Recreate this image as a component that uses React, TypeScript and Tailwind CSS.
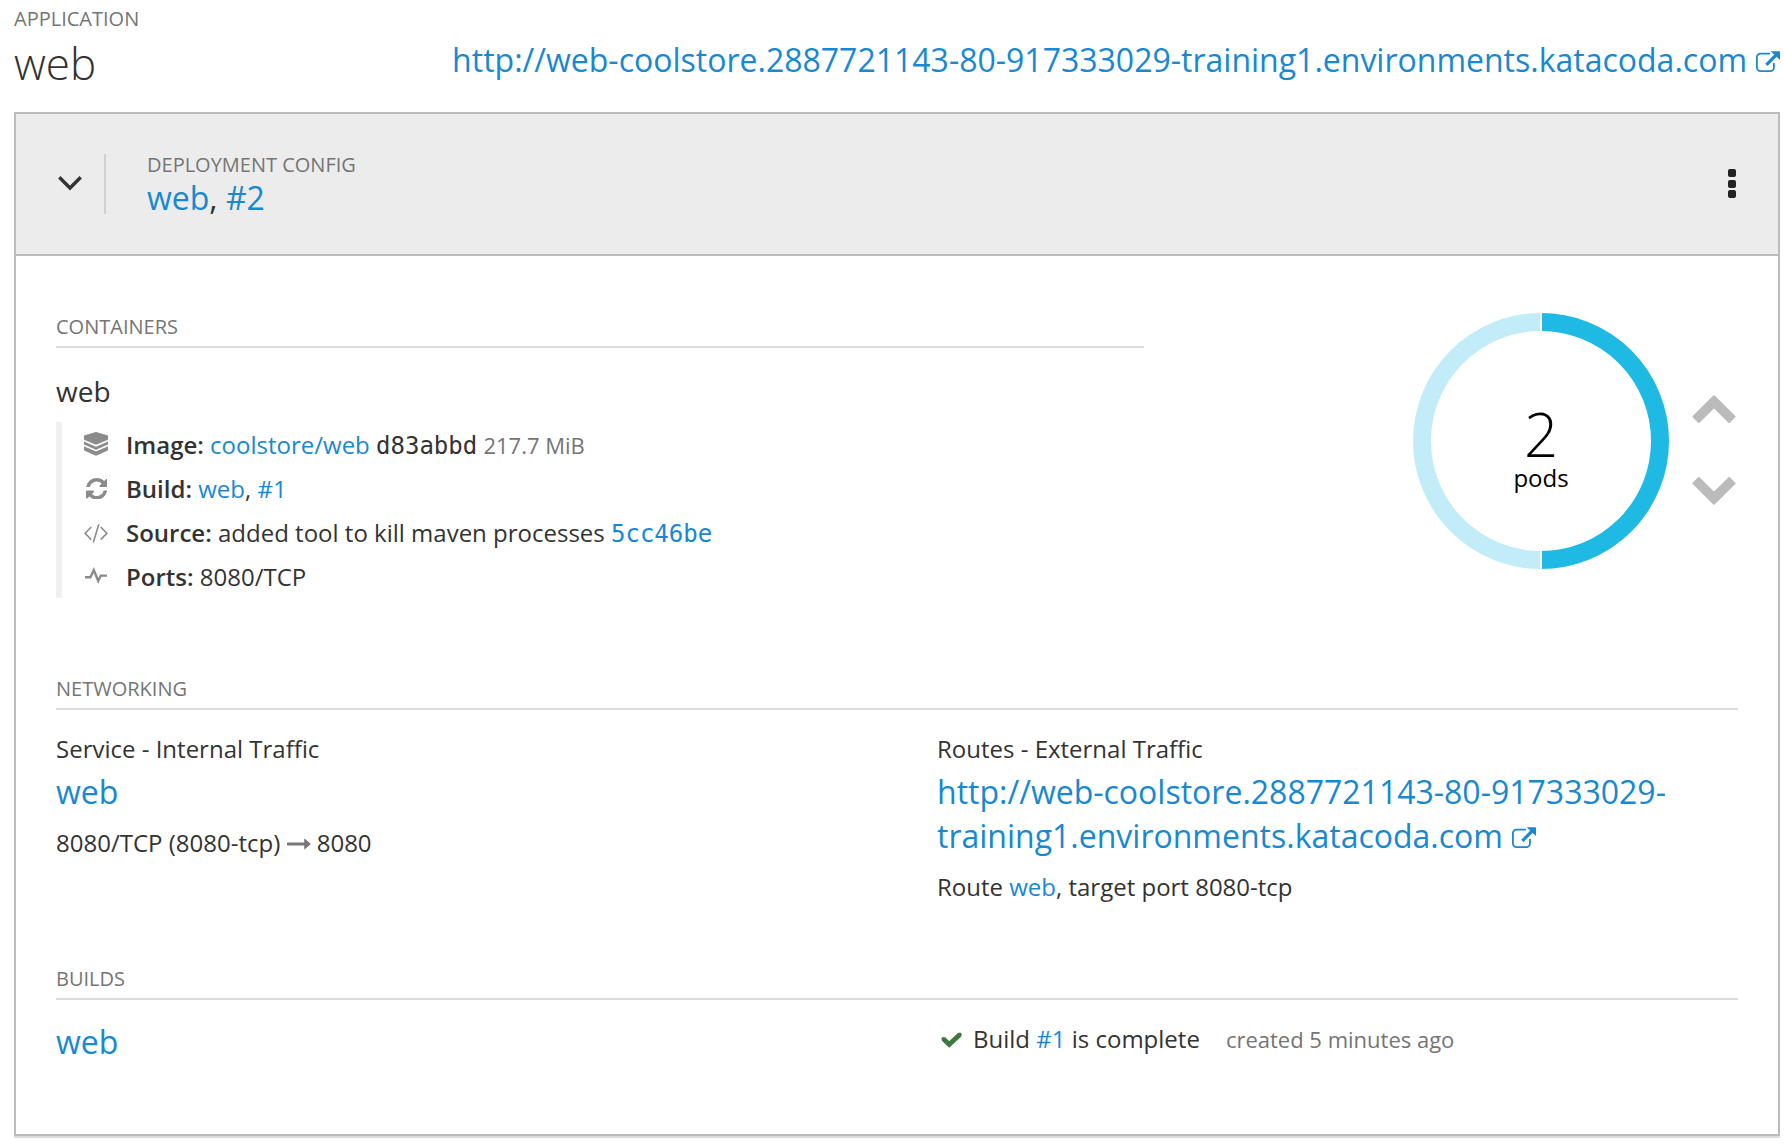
import type { ReactNode } from "react";

const HOST_START = "http://web-coolstore.2887721143-80-917333029-";
const HOST_END = "training1.environments.katacoda.com";

function Link({ children, className = "" }: { children: ReactNode; className?: string }) {
  return (
    <a href="#" className={`text-[#1888d0] ${className}`}>
      {children}
    </a>
  );
}

function ExternalLinkIcon({ className = "" }: { className?: string }) {
  return (
    <svg width="24" height="21" viewBox="0 0 24 21" fill="none" className={`shrink-0 text-[#1888d0] ${className}`}>
      <path
        d="M14 2.6H4.5A3.6 3.6 0 0 0 .9 6.2v10.3a3.6 3.6 0 0 0 3.6 3.6h9.8a3.6 3.6 0 0 0 3.6-3.6V12"
        stroke="currentColor"
        strokeWidth="1.8"
      />
      <path d="M10.4 13.8 20.5 3.7" stroke="currentColor" strokeWidth="3.2" />
      <path d="M14.6.3h8.6c.5 0 .8.3.8.8v8z" fill="currentColor" />
    </svg>
  );
}

function AngleDownIcon() {
  return (
    <svg width="24" height="15" viewBox="0 0 24 15" fill="none">
      <path d="M1.3 1.3 12 12 22.7 1.3" stroke="#333" strokeWidth="3.4" />
    </svg>
  );
}

function ImageIcon() {
  return (
    <svg width="24" height="24" viewBox="0 0 24 24" fill="currentColor" className="-mt-[2px]">
      <path d="M12 0 23.3 3.2Q24 3.5 24 4.2V7.8L12 12.8 0 7.8V4.2Q0 3.5.7 3.2Z" />
      <path d="M0 9.6 12 14.8 24 9.6V12.6L12 17.8 0 12.6Z" />
      <path d="M0 14.3 12 19.5 24 14.3V17.6Q24 18.5 23.3 18.8L12 23.8.7 18.8Q0 18.5 0 17.6Z" />
    </svg>
  );
}

function RefreshIcon() {
  return (
    <svg width="21.5" height="21.5" viewBox="0 0 1536 1536" fill="currentColor" className="ml-px">
      <path d="M1511 928q0 5-1 7-64 268-268 434.5t-478 166.5q-146 0-282.5-55t-243.5-157l-129 129q-19 19-45 19t-45-19-19-45v-448q0-26 19-45t45-19h448q26 0 45 19t19 45-19 45l-137 137q71 66 161 102t187 36q134 0 250-65t186-179q11-17 53-117 8-23 30-23h192q13 0 22.5 9.5t9.5 22.5zm25-800v448q0 26-19 45t-45 19h-448q-26 0-45-19t-19-45 19-45l138-138q-148-137-349-137-134 0-250 65t-186 179q-11 17-53 117-8 23-30 23h-199q-13 0-22.5-9.5t-9.5-22.5v-7q65-268 270-434.5t480-166.5q146 0 284 55.5t245 156.5l130-129q19-19 45-19t45 19 19 45z" />
    </svg>
  );
}

function CodeIcon() {
  return (
    <svg width="24" height="19" viewBox="0 0 24 19" fill="none" stroke="currentColor" strokeWidth="1.6" className="mt-[2px]">
      <path d="M7.3 3 1.1 9.3 7.3 15.6M16.7 3l6.2 6.3-6.2 6.3M14.8.3 9.3 18.4" />
    </svg>
  );
}

function PulseIcon() {
  return (
    <svg width="22" height="18" viewBox="0 0 22 18" fill="none" stroke="currentColor" strokeWidth="2.4" className="-mt-[2px]">
      <path d="M0 10.2H5.4L8.8 3 13.2 14 15.8 8.6H22" />
    </svg>
  );
}

function ArrowRightIcon() {
  return (
    <svg width="24" height="12" viewBox="0 0 24 12" fill="#777" className="mr-[6px] ml-[6.5px] inline-block align-[2px]">
      <path d="M.6 4.6H17.2V1.2Q17.3.3 18.1.9L23.3 5.6Q23.7 6 23.3 6.4L18.1 11.1Q17.3 11.7 17.2 10.8V7.4H.6Q0 7.4 0 6.8V5.2Q0 4.6.6 4.6Z" />
    </svg>
  );
}

function CheckIcon() {
  return (
    <svg width="22" height="16" viewBox="0 0 22 16" fill="none">
      <path d="M2.3 6.8 8.2 12.4 18.9 2.4" stroke="#40783f" strokeWidth="4.8" strokeLinejoin="miter" />
      <path d="M2.3 6.8 8.2 12.4 18.9 2.4" stroke="#40783f" strokeWidth="3.6" strokeLinecap="round" />
    </svg>
  );
}

function ScaleIcon({ className = "" }: { className?: string }) {
  return (
    <svg width="44" height="28" viewBox="0 0 44 28" className={className}>
      <path
        d="M22 1.2 42.6 21.6 37.2 27 22 12 6.8 27 1.4 21.6Z"
        fill="#bbb"
        stroke="#bbb"
        strokeWidth="2"
        strokeLinejoin="round"
      />
    </svg>
  );
}

function PodDonut() {
  return (
    <div className="relative size-64">
      <svg width="256" height="256" viewBox="0 0 256 256" fill="none" strokeWidth="18">
        <path d="M128 9A119 119 0 0 1 128 247" stroke="#1fbae3" />
        <path d="M128 247A119 119 0 0 1 128 9" stroke="#c2edf8" />
        <path d="M128 0V256" stroke="#fff" strokeWidth="2" />
      </svg>
      <div className="absolute inset-0 flex flex-col items-center text-black">
        <span className="mt-[90px] text-[60px] leading-[62px] font-light">2</span>
        <span className="text-2xl leading-[25px]">pods</span>
      </div>
    </div>
  );
}

function SectionTitle({ children, className = "" }: { children: ReactNode; className?: string }) {
  return (
    <h2 className={`border-b-2 border-[#dcdcdc] pb-1.5 text-xl leading-[27px] text-[#757575] uppercase ${className}`}>
      {children}
    </h2>
  );
}

function DetailRow({ icon, label, children }: { icon: ReactNode; label: string; children: ReactNode }) {
  return (
    <li className="flex h-11 items-start pt-px leading-[43px]">
      <span className="flex h-[43px] w-[68px] shrink-0 items-center justify-center text-[#8b8b8b]">{icon}</span>
      <span className="-ml-1 whitespace-pre">
        <strong className="font-semibold">{label}</strong> {children}
      </span>
    </li>
  );
}

export default function App() {
  return (
    <div className="h-[1148px] w-[1784px] overflow-hidden bg-white pr-1 pl-3.5 font-['Open_Sans',sans-serif] text-2xl text-[#333]">
      <header className="flex h-28 items-start justify-between">
        <div className="pt-[5px]">
          <div className="text-xl leading-[27px] text-[#757575] uppercase">Application</div>
          <h1 className="mt-[7px] text-[44px] leading-[48px] font-light">web</h1>
        </div>
        <div className="flex pt-[38px]">
          <Link className="text-[32px] leading-[43px] whitespace-nowrap">
            {HOST_START}
            {HOST_END}
          </Link>
          <ExternalLinkIcon className="mt-[13px] ml-[9px]" />
        </div>
      </header>

      <main className="h-[1024px] border-2 border-[#bbb] bg-white shadow-[0_2px_0_#dcdcdc]">
        <div className="flex h-[142px] items-start border-b-2 border-[#bbb] bg-[#ececec]">
          <button className="mt-10 flex h-[60px] w-[90px] items-start justify-end border-r-2 border-[#d1d1d1] pt-[22px] pr-[22px]">
            <AngleDownIcon />
          </button>
          <div className="mt-[38px] ml-[41px]">
            <div className="text-xl leading-[25px] text-[#757575] uppercase">Deployment Config</div>
            <div className="text-[32px] leading-[41px]">
              <Link>web</Link>, <Link>#2</Link>
            </div>
          </div>
          <button className="mt-[55px] mr-[42px] ml-auto flex flex-col gap-[2.5px]">
            <span className="size-2 rounded-[2px] bg-[#222]" />
            <span className="size-2 rounded-[2px] bg-[#222]" />
            <span className="size-2 rounded-[2px] bg-[#222]" />
          </button>
        </div>

        <div className="px-10">
          <div className="flex items-start">
            <section className="w-[1088px] pt-[57px]">
              <SectionTitle>Containers</SectionTitle>
              <h3 className="mt-[21px] text-[28px] leading-[44px]">web</h3>
              <ul className="mt-[9px] border-l-6 border-[#f0f0f0]">
                <DetailRow icon={<ImageIcon />} label="Image:">
                  <Link>coolstore/web</Link> <span className="font-['DejaVu_Sans_Mono',monospace]">d83abbd</span>{" "}
                  <span className="text-[22px] text-[#757575]">217.7 MiB</span>
                </DetailRow>
                <DetailRow icon={<RefreshIcon />} label="Build:">
                  <Link>web</Link>, <Link>#1</Link>
                </DetailRow>
                <DetailRow icon={<CodeIcon />} label="Source:">
                  added tool to kill maven processes{" "}
                  <Link className="font-['DejaVu_Sans_Mono',monospace]">5cc46be</Link>
                </DetailRow>
                <DetailRow icon={<PulseIcon />} label="Ports:">
                  8080/TCP
                </DetailRow>
              </ul>
            </section>
            <div className="mt-[57px] ml-[269px] flex">
              <PodDonut />
              <div className="mt-[82px] ml-[23px] flex flex-col gap-[54px]">
                <ScaleIcon />
                <ScaleIcon className="rotate-180" />
              </div>
            </div>
          </div>

          <section className="mt-[77px]">
            <SectionTitle>Networking</SectionTitle>
            <div className="mt-[17px] grid grid-cols-2 gap-20 leading-[43px]">
              <div>
                <div>Service - Internal Traffic</div>
                <Link className="block text-[32px]">web</Link>
                <div className="mt-2 whitespace-nowrap">
                  8080/TCP (8080-tcp)
                  <ArrowRightIcon />
                  8080
                </div>
              </div>
              <div>
                <div>Routes - External Traffic</div>
                <Link className="block text-[32px]">{HOST_START}</Link>
                <div className="mt-px flex">
                  <Link className="text-[32px]">{HOST_END}</Link>
                  <ExternalLinkIcon className="mt-[13px] ml-[9px]" />
                </div>
                <div className="mt-2">
                  Route <Link>web</Link>, target port 8080-tcp
                </div>
              </div>
            </div>
          </section>

          <section className="mt-[57px]">
            <SectionTitle>Builds</SectionTitle>
            <div className="grid grid-cols-2 gap-20 leading-[43px]">
              <Link className="mt-5 text-[32px]">web</Link>
              <div className="mt-[17px] flex items-baseline pl-1">
                <CheckIcon />
                <span className="ml-2.5">
                  Build <Link>#1</Link> is complete
                </span>
                <span className="ml-[26px] text-[22px] text-[#757575]">created 5 minutes ago</span>
              </div>
            </div>
          </section>
        </div>
      </main>
    </div>
  );
}
